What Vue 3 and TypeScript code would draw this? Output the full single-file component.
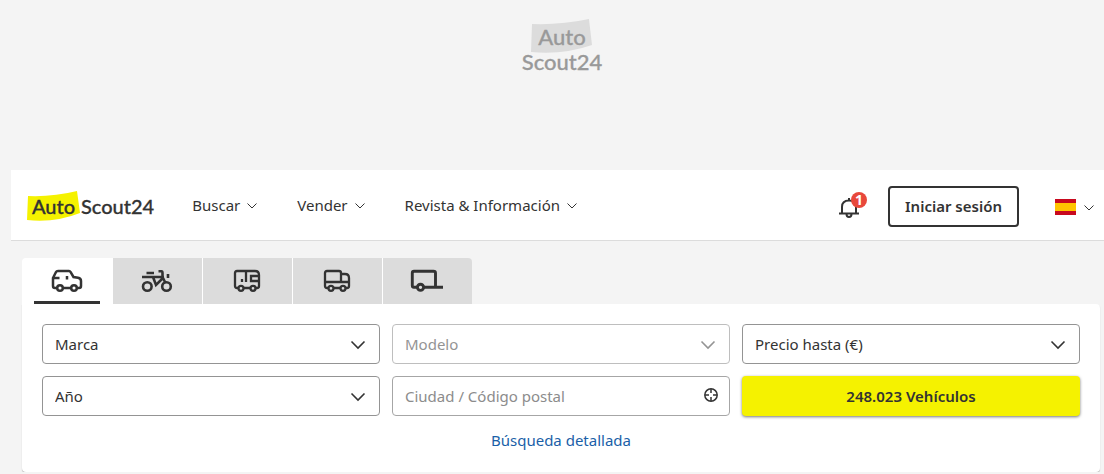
<script setup lang="ts">
import { ref } from 'vue'

interface Tab {
  id: string
  label: string
  width: number
  paths: string[]
  wheels: { x: number; y: number; r: number }[]
  stroke: number
}

const navItems: string[] = ['Buscar', 'Vender', 'Revista & Información']

const tabs: Tab[] = [
  {
    id: 'car',
    label: 'Coches',
    width: 30,
    stroke: 2.5,
    paths: [
      'M5 18H3Q1 18 1 16V8L4 2Q4.500 1 6 1H17Q18 1 18.500 2L21.500 7L26 7.800Q29 8.500 29 11V16Q29 18 27 18H25M11 18H19',
      'M1 8H7.500M15 6V9.500',
    ],
    wheels: [{ x: 8, y: 18, r: 2.8 }, { x: 22, y: 18, r: 2.8 }],
  },
  {
    id: 'motorbike',
    label: 'Motos',
    width: 30,
    stroke: 2.6,
    paths: [
      'M4.500 3H12M0 7H22M16.500 1.200H19.500Q20.500 1.200 20.500 3V7L23.500 13M11 7L14 15L21 8',
      'M26 4V8',
    ],
    wheels: [{ x: 5.3, y: 16.5, r: 4.3 }, { x: 24.5, y: 16.5, r: 4.3 }],
  },
  {
    id: 'camper',
    label: 'Caravanas',
    width: 26,
    stroke: 2.3,
    paths: [
      'M4 18H3Q1 18 1 16V3Q1 1 3 1H21Q25 1 25 5V16Q25 18 23 18H22M10 18H16',
      'M12 1V12M25 6H17V11H25M8 9V12',
    ],
    wheels: [{ x: 7, y: 18.3, r: 2.5 }, { x: 19, y: 18.3, r: 2.5 }],
  },
  {
    id: 'truck',
    label: 'Camiones',
    width: 26,
    stroke: 2.3,
    paths: [
      'M4 18H3Q1 18 1 16V3Q1 1 3 1H15Q17 1 17 3V12M17 4H21Q25 4 25 8V16Q25 18 23 18H22M10 18H16M1 12H25',
    ],
    wheels: [{ x: 7, y: 18.3, r: 2.5 }, { x: 19, y: 18.3, r: 2.5 }],
  },
  {
    id: 'trailer',
    label: 'Remolques',
    width: 32,
    stroke: 2.9,
    paths: ['M6 17.300H3Q1.300 17.300 1.300 15.500V3Q1.300 1.300 3 1.300H22.500Q24.500 1.300 24.500 3V17.300M13 17.300H32'],
    wheels: [{ x: 9.5, y: 17.3, r: 3.1 }],
  },
]

const activeTab = ref('car')
const city = ref('')
</script>

<template>
  <div class="page">
    <div class="banner">
      <div class="brand brand-stacked">
        <span class="brand-mark">
          <svg class="brand-flag" viewBox="0 0 60 36" preserveAspectRatio="none" aria-hidden="true">
            <path d="M1 5Q30 6 57 0L60 26Q32 36 0 33Z" />
          </svg>
          <span class="brand-word">Auto</span>
        </span>
        <span class="brand-word">Scout24</span>
      </div>
    </div>

    <header class="header">
      <a class="brand" href="#" aria-label="AutoScout24">
        <span class="brand-mark">
          <svg class="brand-flag" viewBox="0 0 53 30" preserveAspectRatio="none" aria-hidden="true">
            <path d="M1 5Q26 6 50 0L53 22Q28 32 0 29Z" />
          </svg>
          <span class="brand-word">Auto</span>
        </span>
        <span class="brand-word">Scout24</span>
      </a>

      <nav class="nav">
        <button v-for="item in navItems" :key="item" type="button" class="nav-item">
          {{ item }}
          <svg class="mini-chevron" viewBox="0 0 10 6" aria-hidden="true"><path d="M0.500 0.500L5 5L9.500 0.500" /></svg>
        </button>
      </nav>

      <div class="actions">
        <button type="button" class="bell" aria-label="Notificaciones">
          <svg viewBox="0 0 20 20" aria-hidden="true">
            <path d="M0 15.500H20M3 15V9Q3 2.500 10 2.500Q17 2.500 17 9V15M10 0V3M7.500 16Q7.500 19 10 19Q12.500 19 12.500 16" />
          </svg>
          <span class="badge">1</span>
        </button>
        <button type="button" class="login">Iniciar sesión</button>
        <button type="button" class="language" aria-label="Idioma">
          <svg class="flag" viewBox="0 0 21 16" aria-hidden="true">
            <rect width="21" height="16" fill="#c8091e" />
            <rect y="4" width="21" height="8" fill="#ffc400" />
          </svg>
          <svg class="mini-chevron" viewBox="0 0 10 6" aria-hidden="true"><path d="M0.500 0.500L5 5L9.500 0.500" /></svg>
        </button>
      </div>
    </header>

    <main class="search">
      <div class="tabs" role="tablist">
        <button
          v-for="tab in tabs"
          :key="tab.id"
          type="button"
          role="tab"
          class="tab"
          :class="{ active: tab.id === activeTab }"
          :aria-selected="tab.id === activeTab"
          :aria-label="tab.label"
          @click="activeTab = tab.id"
        >
          <svg class="tab-icon" :width="tab.width" height="22" :viewBox="`0 0 ${tab.width} 22`" :stroke-width="tab.stroke" aria-hidden="true">
            <path v-for="d in tab.paths" :key="d" :d="d" />
            <circle v-for="w in tab.wheels" :key="w.x" :cx="w.x" :cy="w.y" :r="w.r" />
          </svg>
        </button>
      </div>

      <form class="panel" @submit.prevent>
        <div class="fields">
          <div class="field">
            <select aria-label="Marca"><option>Marca</option></select>
            <svg class="chevron" viewBox="0 0 14 8" aria-hidden="true"><path d="M0.500 0.500L7 7L13.500 0.500" /></svg>
          </div>
          <div class="field disabled">
            <select aria-label="Modelo" disabled><option>Modelo</option></select>
            <svg class="chevron" viewBox="0 0 14 8" aria-hidden="true"><path d="M0.500 0.500L7 7L13.500 0.500" /></svg>
          </div>
          <div class="field">
            <select aria-label="Precio hasta (€)"><option>Precio hasta (€)</option></select>
            <svg class="chevron" viewBox="0 0 14 8" aria-hidden="true"><path d="M0.500 0.500L7 7L13.500 0.500" /></svg>
          </div>
          <div class="field">
            <select aria-label="Año"><option>Año</option></select>
            <svg class="chevron" viewBox="0 0 14 8" aria-hidden="true"><path d="M0.500 0.500L7 7L13.500 0.500" /></svg>
          </div>
          <div class="field">
            <input v-model="city" type="text" placeholder="Ciudad / Código postal" aria-label="Ciudad / Código postal" />
            <button type="button" class="locate" aria-label="Usar mi ubicación">
              <svg viewBox="0 0 14 14" aria-hidden="true">
                <circle cx="7" cy="7" r="6.200" />
                <path d="M7 1V5M7 9V13M1 7H5M9 7H13" />
              </svg>
            </button>
          </div>
          <button type="submit" class="submit">248.023 Vehículos</button>
        </div>
        <a class="more" href="#">Búsqueda detallada</a>
      </form>
    </main>
  </div>
</template>

<style>
body {
  background: #f4f4f4;
}
</style>

<style scoped>
.page {
  color: #333;
  font: 15px/20px "Noto Sans", "Open Sans", sans-serif;
}

.page * {
  box-sizing: border-box;
}

button,
select,
input {
  margin: 0;
  color: inherit;
  font: inherit;
}

button {
  padding: 0;
  border: 0;
  background: none;
  cursor: pointer;
}

svg {
  display: block;
  fill: none;
}

.banner {
  display: flex;
  justify-content: center;
  height: 170px;
  padding: 19px 2px 0 22px;
}

.brand {
  display: flex;
  align-items: center;
  gap: 1px;
  color: #333;
  font: 500 20px/30px Lato, sans-serif;
  text-decoration: none;
}

.brand-mark {
  position: relative;
  display: flex;
  justify-content: center;
  width: 53px;
  height: 30px;
}

.brand-flag {
  position: absolute;
  top: 0;
  left: 0;
  width: 100%;
  height: 30px;
  fill: #f5f200;
}

.brand-word {
  position: relative;
  -webkit-text-stroke: 0.3px currentColor;
}

.brand-stacked {
  flex-direction: column;
  align-self: flex-start;
  gap: 0;
  color: #999;
  font-size: 22px;
  line-height: 25px;
}

.brand-stacked .brand-mark {
  width: 61px;
  height: 30px;
  padding-top: 5px;
}

.brand-stacked .brand-flag {
  height: 36px;
  fill: #dcdcdc;
}

.header {
  display: flex;
  align-items: center;
  height: 71px;
  margin-left: 11px;
  padding: 0 10px 0 16px;
  border-bottom: 1px solid #dcdcdc;
  background: #fff;
}

.header > .brand {
  margin-top: 2px;
}

.nav {
  display: flex;
  gap: 40px;
  margin-left: 38px;
}

.nav-item {
  display: flex;
  align-items: center;
  gap: 7px;
  white-space: nowrap;
}

.mini-chevron {
  width: 10px;
  height: 6px;
  margin-top: 2px;
  stroke: #333;
}

.actions {
  display: flex;
  align-items: center;
  margin-left: auto;
}

.bell {
  position: relative;
  width: 20px;
  height: 20px;
  margin: 5px 29px 0 0;
}

.bell svg {
  stroke: #333;
  stroke-width: 2;
}

.badge {
  position: absolute;
  top: -6px;
  right: -8px;
  width: 16px;
  height: 16px;
  border-radius: 8px;
  background: #e8483b;
  color: #fff;
  font-size: 14px;
  font-weight: 700;
  line-height: 16px;
}

.login {
  height: 41px;
  margin-top: 2px;
  padding: 0 15px;
  border: 2px solid #333;
  border-radius: 4px;
  font-weight: 600;
}

.language {
  display: flex;
  align-items: center;
  gap: 8px;
  margin: 3px 0 0 36px;
}

.language .flag {
  width: 21px;
  height: 16px;
}

.search {
  padding: 17px 4px 0 22px;
}

.tabs {
  display: flex;
}

.tab {
  position: relative;
  display: flex;
  justify-content: center;
  width: 90px;
  height: 46px;
  padding: 12px 1px 0 0;
  border-left: 1px solid #fff;
  background: #dcdcdc;
}

.tab:first-child {
  padding-right: 0;
  border-left: 0;
  border-radius: 4px 0 0 0;
}

.tab:last-child {
  border-radius: 0 4px 0 0;
}

.tab.active {
  background: #fff;
}

.tab.active::after {
  position: absolute;
  right: 12px;
  bottom: 0;
  left: 12px;
  height: 3px;
  background: #333;
  content: "";
}

.tab-icon {
  overflow: visible;
  stroke: #333;
}

.panel {
  display: flex;
  flex-direction: column;
  align-items: center;
  gap: 14px;
  padding: 20px 20px 22px;
  border-radius: 0 4px 4px 4px;
  background: #fff;
  box-shadow: 0 1px 1px #b4b4b4;
}

.fields {
  display: grid;
  grid-template-columns: repeat(3, 1fr);
  gap: 12px;
  width: 100%;
}

.field {
  position: relative;
}

.field select,
.field input {
  display: block;
  width: 100%;
  height: 40px;
  padding: 0 40px 0 12px;
  border: 1px solid #949494;
  border-radius: 4px;
  background: #fff;
  appearance: none;
}

.field select:disabled {
  border-color: #bebebe;
  color: #949494;
  opacity: 1;
}

.field input {
  border-color: #a6a6a6;
}

.field input::placeholder {
  color: #8c8c8c;
}

.chevron {
  position: absolute;
  top: 17px;
  right: 15px;
  width: 14px;
  height: 8px;
  overflow: visible;
  stroke: #333;
  stroke-width: 1.6;
  pointer-events: none;
}

.disabled .chevron {
  stroke: #949494;
}

.locate {
  position: absolute;
  top: 12px;
  right: 12px;
  width: 14px;
  height: 14px;
}

.locate svg {
  stroke: #333;
  stroke-width: 1.5;
}

.submit {
  height: 40px;
  border-radius: 4px;
  background: #f5f200;
  box-shadow: 0 1px 3px #777;
  font-weight: 600;
}

.more {
  color: #1b5fa8;
  text-decoration: none;
}
</style>
